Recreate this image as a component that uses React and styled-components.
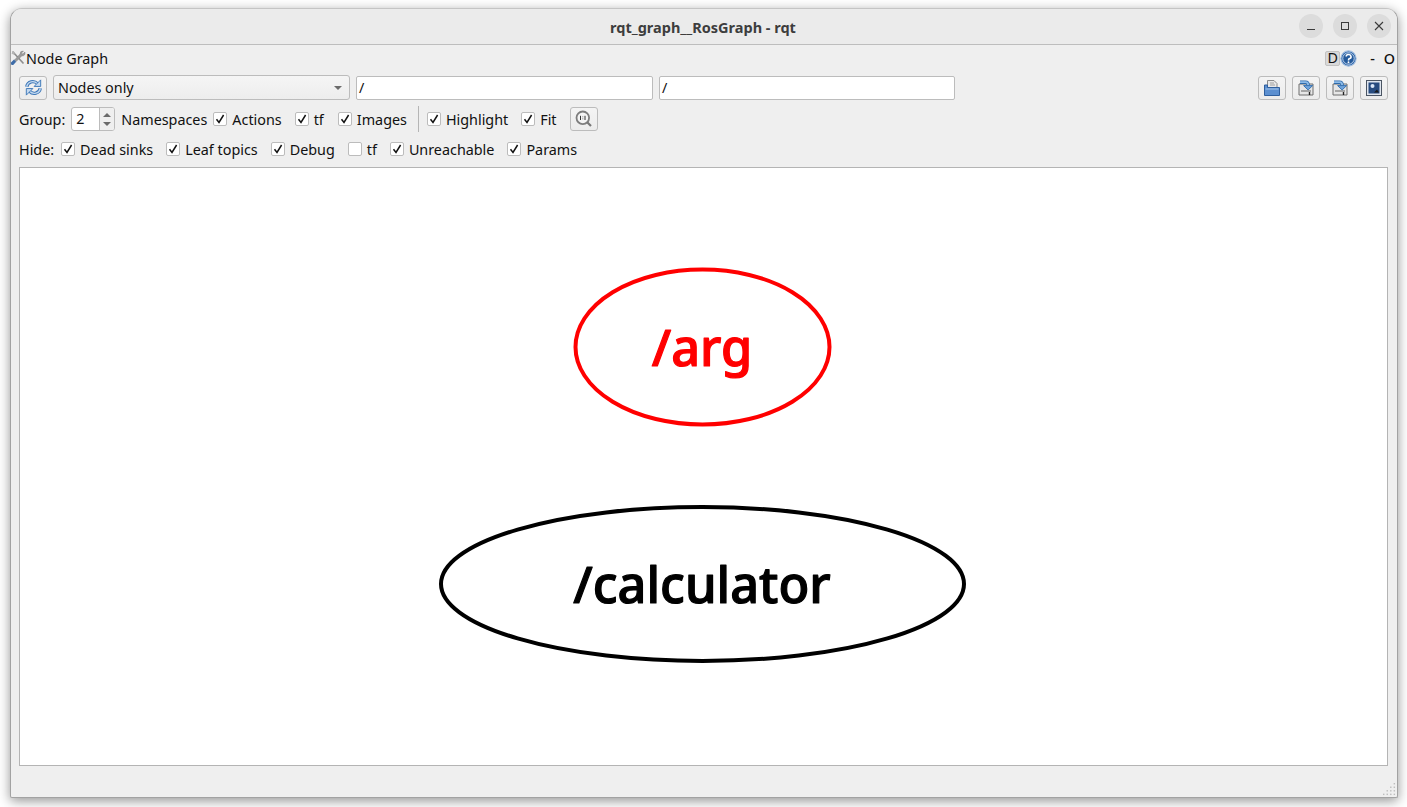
import React from "react";
import styled, { createGlobalStyle } from "styled-components";

const GlobalStyle = createGlobalStyle`
  html, body { margin: 0; padding: 0; background: #fff; }
  body { font-family: "Noto Sans", "Open Sans", sans-serif; color: #111; }
`;

const Desktop = styled.div`
  width: 1407px;
  height: 807px;
  padding: 8px 9px 9px 10px;
  box-sizing: border-box;
  overflow: hidden;
`;

const Window = styled.div`
  position: relative;
  width: 1388px;
  height: 790px;
  display: flex;
  flex-direction: column;
  background: #efefef;
  border: 1px solid #a2a2a2;
  border-top-color: #c4c4c4;
  box-sizing: border-box;
  border-radius: 12px 12px 2px 2px;
  box-shadow: 0 3px 12px rgba(0, 0, 0, 0.42);
`;

const TitleBar = styled.header`
  height: 35px;
  flex: none;
  position: relative;
  display: flex;
  align-items: center;
  justify-content: center;
  background: #ebebeb;
  border-bottom: 1px solid #bdbdbd;
  border-radius: 11px 11px 0 0;
`;

const Title = styled.div`
  font-size: 14.5px;
  font-weight: 700;
  color: #3d3d3d;
  margin-left: -2px;
`;

const WindowControls = styled.div`
  position: absolute;
  right: 6px;
  top: 5px;
  display: flex;
  gap: 10px;
`;

const WindowControl = styled.div`
  width: 24px;
  height: 24px;
  border-radius: 50%;
  background: #dcdcdc;
  display: flex;
  align-items: center;
  justify-content: center;
  color: #3a3a3a;
`;

const Body = styled.div`
  flex: 1;
  display: flex;
  flex-direction: column;
  padding: 0 9px 0 8px;
  font-size: 14.35px;
`;

const DockTitle = styled.div`
  height: 26px;
  margin: 0 -9px 4px -9px;
  display: flex;
  align-items: center;
`;

const DockActions = styled.div`
  margin-left: auto;
  display: flex;
  align-items: center;
`;

const DockButton = styled.div`
  width: 15px;
  height: 15px;
  background: #d9d9d9;
  border: 1px solid #c2c2c2;
  border-radius: 2px;
  box-sizing: border-box;
  display: flex;
  align-items: center;
  justify-content: center;
  line-height: 1;
`;

const DockGlyph = styled.span`
  margin-left: ${(p) => p.$left}px;
  margin-right: ${(p) => p.$right || 0}px;
  font-weight: 500;
`;

const Row = styled.div`
  display: flex;
  align-items: center;
  height: ${(p) => p.$height}px;
  margin-top: ${(p) => p.$top || 0}px;
`;

const ToolButton = styled.button`
  width: 28px;
  height: 24px;
  flex: none;
  padding: 0;
  margin-left: ${(p) => p.$left || 0}px;
  display: flex;
  align-items: center;
  justify-content: center;
  background: linear-gradient(#f4f4f4, #ececec);
  border: 1px solid #bcbcbc;
  border-radius: 3px;
`;

const Combo = styled.div`
  width: 297px;
  height: 25px;
  margin-left: 6px;
  padding: 0 7px 0 4px;
  box-sizing: border-box;
  display: flex;
  align-items: center;
  justify-content: space-between;
  background: linear-gradient(#f5f5f5, #ededed);
  border: 1px solid #bcbcbc;
  border-radius: 3px;
`;

const ComboArrow = styled.span`
  width: 0;
  height: 0;
  border-left: 4px solid transparent;
  border-right: 4px solid transparent;
  border-top: 4px solid #6b6b6b;
`;

const LineEdit = styled.div`
  width: ${(p) => p.$width}px;
  height: 24px;
  margin-left: 6px;
  padding-left: 2px;
  box-sizing: border-box;
  display: flex;
  align-items: center;
  background: #fff;
  border: 1px solid #bcbcbc;
  border-radius: 2px;
`;

const RightTools = styled.div`
  margin-left: auto;
  display: flex;
  gap: 6px;
`;

const SpinBox = styled.div`
  width: 44px;
  height: 24px;
  margin: 0 6px;
  display: flex;
  box-sizing: border-box;
  background: #fff;
  border: 1px solid #bcbcbc;
  border-radius: 3px;
`;

const SpinValue = styled.span`
  flex: 1;
  padding-left: 4px;
  line-height: 22px;
`;

const SpinArrows = styled.div`
  width: 14px;
  display: flex;
  flex-direction: column;
  align-items: center;
  justify-content: center;
  gap: 5px;
  background: #efefef;
  border-left: 1px solid #bcbcbc;
  border-radius: 0 2px 2px 0;
`;

const SpinUp = styled.span`
  width: 0;
  height: 0;
  border-left: 4px solid transparent;
  border-right: 4px solid transparent;
  border-bottom: 4px solid #6b6b6b;
`;

const SpinDown = styled.span`
  width: 0;
  height: 0;
  border-left: 4px solid transparent;
  border-right: 4px solid transparent;
  border-top: 4px solid #6b6b6b;
`;

const CheckItem = styled.label`
  display: flex;
  align-items: center;
  gap: 5px;
  margin-left: ${(p) => p.$left || 0}px;
  white-space: nowrap;
`;

const Box = styled.span`
  width: 14px;
  height: 14px;
  box-sizing: border-box;
  flex: none;
  background: #fff;
  border: 1px solid #bcbcbc;
  border-radius: 2px;
  display: flex;
  align-items: center;
  justify-content: center;
`;

const Separator = styled.div`
  width: 1px;
  height: 26px;
  flex: none;
  margin: 0 8px 0 11px;
  background: #b5b5b5;
`;

const Canvas = styled.div`
  height: 599px;
  margin-top: 7px;
  background: #fff;
  border: 1px solid #b4b4b4;
  box-sizing: border-box;
  flex: none;
`;

const GraphSvg = styled.svg`
  display: block;
  width: 100%;
  height: 100%;
`;

const NodeLabel = styled.text`
  font-family: "Noto Sans", sans-serif;
  font-size: 50.5px;
  font-weight: 500;
  text-anchor: middle;
  fill: ${(p) => p.$color};
  stroke: ${(p) => p.$color};
  stroke-width: 1.2px;
  stroke-linejoin: round;
`;

const Grip = styled.svg`
  position: absolute;
  right: 1px;
  bottom: 1px;
`;

const Check = ({ label, left, checked = true }) => (
  <CheckItem $left={left}>
    <Box>
      {checked && (
        <svg width="10" height="10" viewBox="0 0 10 10">
          <path d="M1.5 5.2 L4 8.4 L8.6 1" fill="none" stroke="#111" strokeWidth="1.5" />
        </svg>
      )}
    </Box>
    {label}
  </CheckItem>
);

const ToolsIcon = () => (
  <svg width="16" height="16" viewBox="0 0 16 16">
    <path d="M2.5 1.5 L13.5 13.5" stroke="#8f8f8f" strokeWidth="1.7" />
    <path d="M1.5 3.5 L3.5 1 L5 3 L3.5 4.8Z" fill="#b5b5b5" />
    <path d="M15 2 L12.8 4 L11.6 3 L13.5 1 Q10 0.6 10 4 L4.5 10 L6.2 11.5 L11.7 6 Q15.6 6 15 2Z" fill="#9b9b9b" stroke="#777" strokeWidth="0.4" />
    <path d="M1 12.4 L4 9.6 L6.2 11.8 L3.2 15 Q0.6 15.4 1 12.4Z" fill="#3f6da8" />
  </svg>
);

const RefreshArrow = ({ flip }) => (
  <g transform={flip ? "rotate(180 9 9)" : undefined}>
    <path d="M2.6 8.2 C3.4 3.2 9.6 2 12.6 5.4" fill="none" stroke="#3e78b8" strokeWidth="3.2" />
    <path d="M2.6 8.2 C3.4 3.2 9.6 2 12.6 5.4" fill="none" stroke="#c4d9f0" strokeWidth="1.4" />
    <path d="M15.8 1.8 V8 H9.6Z" fill="#c4d9f0" stroke="#3e78b8" strokeWidth="0.9" />
  </g>
);

const RefreshIcon = () => (
  <svg width="19" height="19" viewBox="0 0 18 18">
    <RefreshArrow />
    <RefreshArrow flip />
  </svg>
);

const OpenIcon = () => (
  <svg width="18" height="18" viewBox="0 0 18 18">
    <path d="M4.5 1.5 H11 L14 4.5 V9 H4.5Z" fill="#e8e8e8" stroke="#8a8a8a" />
    <path d="M7 4 H11 M7 6 H12" stroke="#a0a0a0" />
    <path d="M1.5 6 H4.5 V8.5 H16.5 V16.5 H1.5Z" fill="#5b8fd0" stroke="#2f5f9e" />
    <path d="M2.5 10 H15.5" stroke="#a6c5ea" />
  </svg>
);

const SaveIcon = () => (
  <svg width="18" height="18" viewBox="0 0 18 18">
    <path d="M2 5 H16 V16 H2Z" fill="#e6e6e6" stroke="#6e6e6e" />
    <path d="M4 12 H14" stroke="#a5a5a5" strokeWidth="2" />
    <path d="M12.5 13 V16" stroke="#222" strokeWidth="1.4" />
    <path d="M3 3.2 H8.5 Q11.2 3.2 11.2 6.5" fill="none" stroke="#2f6bab" strokeWidth="3.4" />
    <path d="M3 3.2 H8.5 Q11.2 3.2 11.2 6.5" fill="none" stroke="#8dbbe8" strokeWidth="1.8" />
    <path d="M6.6 6.6 H15.6 L11.1 11Z" fill="#6fa4dc" stroke="#2f6bab" strokeWidth="0.9" />
  </svg>
);

const ImageIcon = () => (
  <svg width="18" height="18" viewBox="0 0 18 18">
    <rect x="1.5" y="1.5" width="15" height="15" fill="#dfe5ee" stroke="#4b5563" />
    <rect x="3.5" y="3.5" width="11" height="11" fill="#274b7f" />
    <circle cx="7.5" cy="7" r="2" fill="#d9e6f7" />
    <path d="M9 13.5 L12 10.5 L14 13.5Z" fill="#1a1a1a" />
  </svg>
);

const ZoomIcon = () => (
  <svg width="20" height="20" viewBox="0 0 20 20">
    <circle cx="8.8" cy="8.8" r="6.3" fill="#f4f4f4" stroke="#7d7d7d" strokeWidth="1.8" />
    <path d="M13.5 13.5 L17 17" stroke="#777" strokeWidth="2.2" />
    <path d="M6.5 6.8 V11 M11 6.8 V11 M8.8 7.6 V8.2 M8.8 9.6 V10.2" stroke="#333" />
  </svg>
);

const HelpIcon = () => (
  <svg width="17" height="17" viewBox="0 0 16 16">
    <circle cx="8" cy="8" r="7.2" fill="#2f68ad" stroke="#a9c2e0" strokeWidth="1" />
    <circle cx="8" cy="8" r="5.4" fill="#245a9c" stroke="#d6e3f2" strokeWidth="0.8" />
    <path d="M5.8 6.2 A2.3 2 0 1 1 8.6 8.2 Q8 8.6 8 9.8" fill="none" stroke="#fff" strokeWidth="1.5" />
    <circle cx="8" cy="11.6" r="0.9" fill="#fff" />
  </svg>
);

const gripDots = [
  [9, 0],
  [6, 3],
  [9, 3],
  [3, 6],
  [6, 6],
  [9, 6],
  [0, 9],
  [3, 9],
  [6, 9],
  [9, 9],
];

export default function App() {
  return (
    <Desktop>
      <GlobalStyle />
      <Window>
        <TitleBar>
          <Title>rqt_graph__RosGraph - rqt</Title>
          <WindowControls>
            <WindowControl>
              <svg width="10" height="10" viewBox="0 0 10 10">
                <path d="M1 8.5 H9" stroke="currentColor" strokeWidth="1" />
              </svg>
            </WindowControl>
            <WindowControl>
              <svg width="10" height="10" viewBox="0 0 10 10">
                <rect x="1.5" y="1.5" width="7" height="7" fill="none" stroke="currentColor" />
              </svg>
            </WindowControl>
            <WindowControl>
              <svg width="10" height="10" viewBox="0 0 10 10">
                <path d="M1 1 L9 9 M9 1 L1 9" stroke="currentColor" strokeWidth="1.1" />
              </svg>
            </WindowControl>
          </WindowControls>
        </TitleBar>
        <Body>
          <DockTitle>
            <ToolsIcon />
            <span>Node Graph</span>
            <DockActions>
              <DockButton>D</DockButton>
              <HelpIcon />
              <DockGlyph $left={13}>-</DockGlyph>
              <DockGlyph $left={9} $right={2}>O</DockGlyph>
            </DockActions>
          </DockTitle>
          <Row $height={25}>
            <ToolButton><RefreshIcon /></ToolButton>
            <Combo>
              Nodes only
              <ComboArrow />
            </Combo>
            <LineEdit $width={297}>/</LineEdit>
            <LineEdit $width={296}>/</LineEdit>
            <RightTools>
              <ToolButton><OpenIcon /></ToolButton>
              <ToolButton><SaveIcon /></ToolButton>
              <ToolButton><SaveIcon /></ToolButton>
              <ToolButton><ImageIcon /></ToolButton>
            </RightTools>
          </Row>
          <Row $height={24} $top={7}>
            Group:
            <SpinBox>
              <SpinValue>2</SpinValue>
              <SpinArrows>
                <SpinUp />
                <SpinDown />
              </SpinArrows>
            </SpinBox>
            Namespaces
            <Check label="Actions" left={6} />
            <Check label="tf" left={13} />
            <Check label="Images" left={14} />
            <Separator />
            <Check label="Highlight" />
            <Check label="Fit" left={13} />
            <ToolButton $left={13}><ZoomIcon /></ToolButton>
          </Row>
          <Row $height={22} $top={7}>
            Hide:
            <Check label="Dead sinks" left={7} />
            <Check label="Leaf topics" left={13} />
            <Check label="Debug" left={13} />
            <Check label="tf" left={13} checked={false} />
            <Check label="Unreachable" left={13} />
            <Check label="Params" left={13} />
          </Row>
          <Canvas>
            <GraphSvg viewBox="0 0 1367 597">
              <ellipse cx="682.5" cy="179" rx="127" ry="77.5" fill="none" stroke="#f00" strokeWidth="4" />
              <NodeLabel x="682" y="198" $color="#f00">/arg</NodeLabel>
              <ellipse cx="682.5" cy="416" rx="261.5" ry="77" fill="none" stroke="#000" strokeWidth="4" />
              <NodeLabel x="682" y="435" $color="#000">/calculator</NodeLabel>
            </GraphSvg>
          </Canvas>
        </Body>
        <Grip width="13" height="13" viewBox="0 0 11 11">
          {gripDots.map(([x, y]) => (
            <rect key={`${x}-${y}`} x={x} y={y} width="1.2" height="1.2" fill="#bdbdbd" />
          ))}
        </Grip>
      </Window>
    </Desktop>
  );
}
